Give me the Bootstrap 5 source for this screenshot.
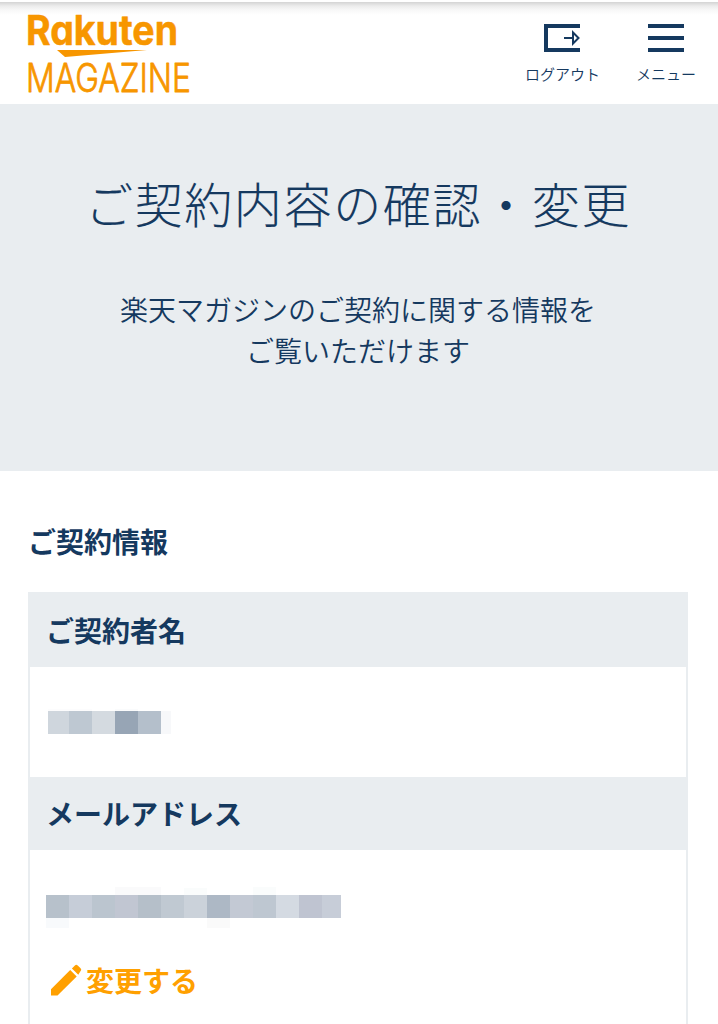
<!DOCTYPE html>
<html lang="ja">
<head>
<meta charset="utf-8">
<meta name="viewport" content="width=device-width, initial-scale=1">
<title>ご契約内容の確認・変更</title>
<link href="https://cdn.jsdelivr.net/npm/bootstrap@5.3.0/dist/css/bootstrap.min.css" rel="stylesheet">
<style>
:root{--navy:#15395f;--mist:#e9edf0;--amber:#ffa000}
body{font-family:"Noto Sans CJK JP","Noto Sans",sans-serif;color:var(--navy);background:#fff}
.site-head{height:104px;padding:0 22px 0 24px;background:linear-gradient(#fff 0 2px,#d4d4d4 2px,#ececec 6px,#f8f8f8 10px,#fff 15px)}
.logo{width:180px;height:104px;overflow:visible}
.tools{gap:36px;padding-top:24px}
.tool{font-size:15px;line-height:20px;color:var(--navy);font-weight:350;white-space:nowrap}
.tool svg{margin-bottom:12px}
.hero{height:367px;background:var(--mist);padding-top:64px}
.hero h1{font-size:48px;line-height:68px;letter-spacing:1.65px;font-weight:200;margin:0 2px 53px 0;-webkit-text-stroke:.1px var(--navy)}
.hero p{font-size:28px;line-height:41px;font-weight:350;margin:0 2px 0 0}
.main-area{height:553px;overflow:hidden;padding:50px 30px 0 28px}
.main-area h2{font-size:28px;line-height:40px;font-weight:700;margin:0 0 31px}
.info{border:solid var(--mist);border-width:0 2px;height:432px}
.info dt{background:var(--mist);font-size:28px;font-weight:700;padding-left:16px;line-height:40px;margin:0}
.info dt.first{height:75px;padding-top:18px}
.info dt.second{height:73px;padding-top:16px}
.info dd{margin:0}
.name-cell{height:110px;padding:42px 0 0 17px}
.mail-cell{padding:34px 0 0 15px}
.edit{color:var(--amber);font-size:28px;font-weight:700;line-height:40px;gap:3px;margin-top:32px;padding-left:6px}
svg{display:block}
</style>
</head>
<body>
<header class="site-head d-flex justify-content-between">
  <a href="#" class="d-block" aria-label="Rakuten MAGAZINE">
    <svg class="logo" viewBox="24 0 180 104" fill="#f79600" stroke="#f79600" stroke-linejoin="round">
      <text x="26" y="45" font-family="Inter,sans-serif" font-weight="700" font-size="41" stroke-width=".5" textLength="152" lengthAdjust="spacingAndGlyphs" style="font-feature-settings:'cv11' 1">Rakuten</text>
      <path stroke="none" d="M57 50H147L65 57Z"/>
      <text x="26" y="92" font-family="Inter,sans-serif" font-weight="300" font-size="39.5" stroke-width=".8" textLength="165" lengthAdjust="spacingAndGlyphs">MAGAZINE</text>
    </svg>
  </a>
  <nav class="tools d-flex">
    <a href="#" class="tool d-flex flex-column align-items-center text-decoration-none">
      <svg width="36" height="28" fill="none" stroke="#15395f"><path stroke-width="4" d="M36 2H2V26H36"/><path stroke-width="2" d="M20 14H29M29 8.5V19.5L34.5 14Z"/></svg>
      <span>ログアウト</span>
    </a>
    <a href="#" class="tool d-flex flex-column align-items-center text-decoration-none">
      <svg width="36" height="28" stroke="#15395f" stroke-width="4"><path d="M0 2H36M0 14H36M0 26H36"/></svg>
      <span>メニュー</span>
    </a>
  </nav>
</header>
<section class="hero text-center">
  <h1>ご契約内容の確認・変更</h1>
  <p>楽天マガジンのご契約に関する情報を<br>ご覧いただけます</p>
</section>
<main class="main-area">
  <h2>ご契約情報</h2>
  <dl class="info m-0">
    <dt class="first">ご契約者名</dt>
    <dd class="name-cell">
      <svg width="126" height="26" shape-rendering="crispEdges"><path fill="#fcfcfd" d="M1 0h44v2H1z"/><path fill="#fafbfc" d="M68 0h23v2H68z"/><path fill="#cfd6dd" d="M1 2h21v23H1z"/><path fill="#bec8d2" d="M22 2h23v23H22z"/><path fill="#d4dae0" d="M45 2h23v23H45z"/><path fill="#97a5b5" d="M68 2h23v23H68z"/><path fill="#b4bfcb" d="M91 2h23v23H91z"/><path fill="#f7f8fa" d="M114 2h10v23h-10z"/></svg>
    </dd>
    <dt class="second">メールアドレス</dt>
    <dd class="mail-cell">
      <svg width="300" height="44" shape-rendering="crispEdges"><g transform="translate(1 3)"><path fill="#fafafb" d="M69 0h46v8H69z"/><path fill="#fafcfc" d="M138 1h23v7h-23zM207 0h23v8h-23z"/><path fill="#b7c1cb" d="M0 8h23v23H0z"/><path fill="#c6cdd8" d="M23 8h23v23H23z"/><path fill="#bbc5cf" d="M46 8h23v23H46z"/><path fill="#c1c6d2" d="M69 8h23v23H69z"/><path fill="#b5bfc9" d="M92 8h23v23H92z"/><path fill="#c0c9d2" d="M115 8h23v23h-23z"/><path fill="#cbd2da" d="M138 8h23v23h-23z"/><path fill="#adb8c5" d="M161 8h23v23h-23z"/><path fill="#c3c9d4" d="M184 8h23v23h-23z"/><path fill="#bec7d1" d="M207 8h23v23h-23z"/><path fill="#d4dae2" d="M230 8h23v23h-23z"/><path fill="#bfc4d1" d="M253 8h23v23h-23z"/><path fill="#c7cdd8" d="M276 8h19v23h-19z"/><path fill="#f8fafc" d="M0 31h23v10H0z"/><path fill="#fafafa" d="M161 31h23v10h-23z"/></g></svg>
      <a href="#" class="edit d-flex text-decoration-none">
        <svg width="32" height="32" class="mt-1" viewBox="0 0 32 32" fill="#ffa000"><path d="M0 25.2 19.2 6 25.7 12.4 6.5 31.6H0ZM20.9 4.4 23.9 1.4Q25.3 0 26.7 1.4L29.6 4.3Q31 5.7 29.6 7.1L27.3 10.8Z"/></svg>
        <span>変更する</span>
      </a>
    </dd>
  </dl>
</main>
<script src="https://cdn.jsdelivr.net/npm/bootstrap@5.3.0/dist/js/bootstrap.bundle.min.js"></script>
</body>
</html>
